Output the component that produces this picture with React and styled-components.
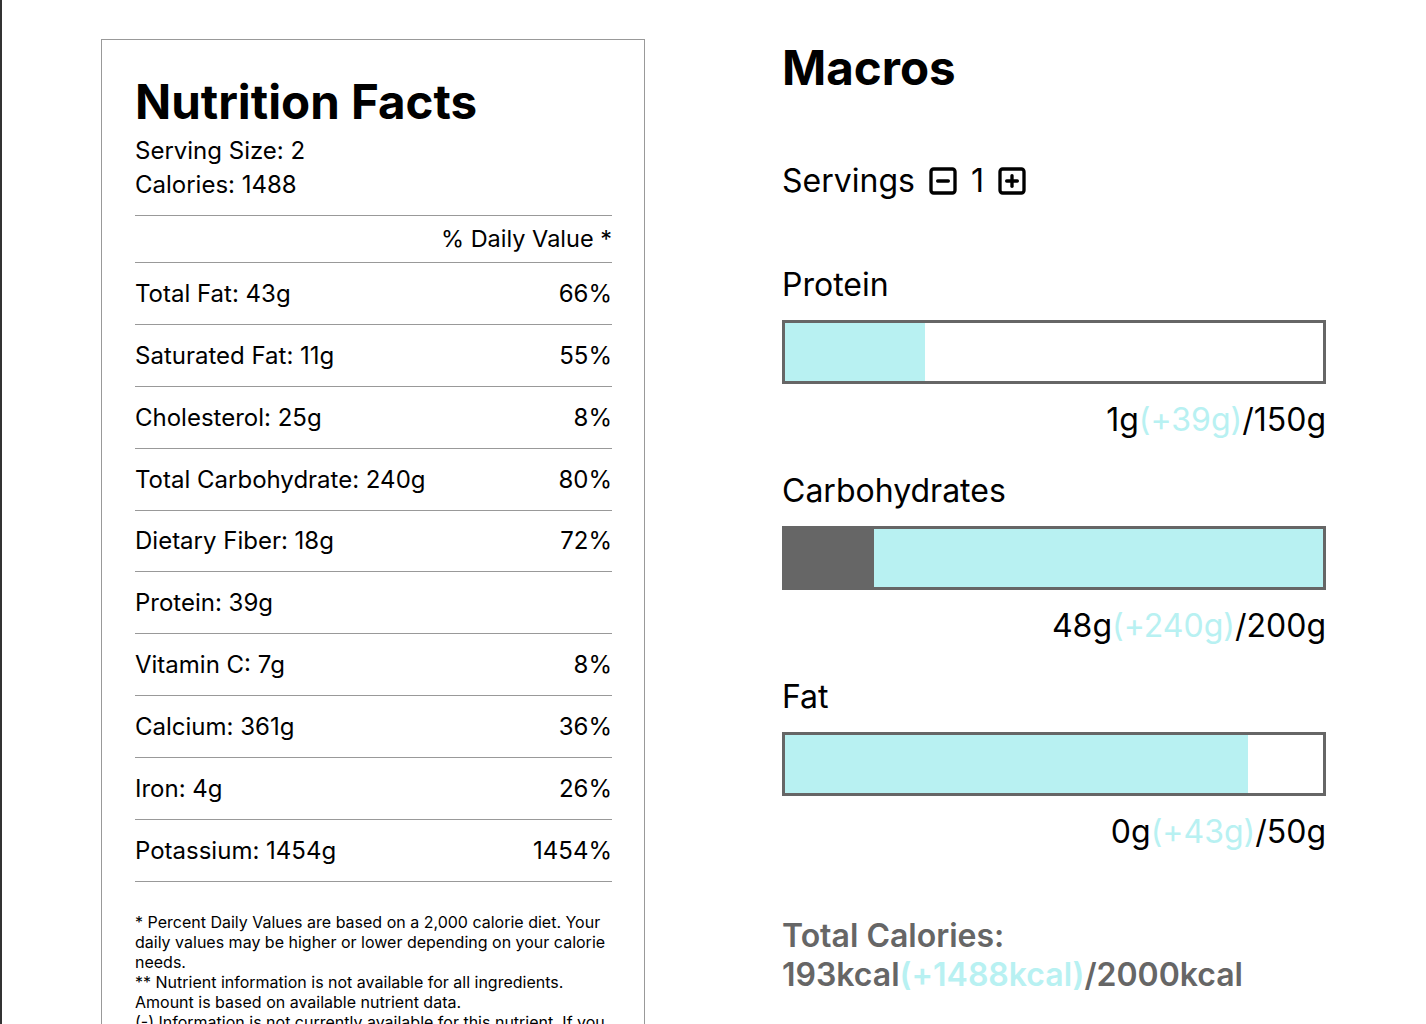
import styled, { createGlobalStyle } from "styled-components";
import { SquareMinus, SquarePlus } from "lucide-react";

const GlobalStyle = createGlobalStyle`
  html, body {
    margin: 0;
    padding: 0;
    background: #fff;
  }
  body {
    font-family: Inter, "Noto Sans", sans-serif;
    color: #000;
  }
`;

const Page = styled.div`
  display: flex;
  align-items: flex-start;
  gap: 137px;
  min-height: 1100px;
  padding: 39px 0 0 99px;
  border-left: 2px solid #333;
`;

const Card = styled.section`
  width: 544px;
  box-sizing: border-box;
  border: 1px solid #999;
  padding: 33px 32px 40px 33px;
`;

const Title = styled.h1`
  margin: 0;
  font-size: 47.5px;
  line-height: 58px;
  font-weight: 700;
`;

const Meta = styled.div`
  margin-top: 3px;
  padding-bottom: 13px;
  border-bottom: 1px solid #999;
  font-size: 24px;
  line-height: 34px;
`;

const Row = styled.div`
  display: flex;
  justify-content: ${(p) => (p.$end ? "flex-end" : "space-between")};
  padding: ${(p) => (p.$end ? "8px 0 9px" : "15.95px 0")};
  border-bottom: 1px solid #999;
  font-size: ${(p) => (p.$end ? "23.5px" : "24px")};
  line-height: 29px;
`;

const Footnote = styled.p`
  margin: 30px 0 0;
  font-size: 16px;
  line-height: 20px;
  white-space: pre-line;
`;

const Macros = styled.section`
  width: 544px;
  display: flex;
  flex-direction: column;
`;

const ServingsRow = styled.div`
  display: flex;
  align-items: center;
  gap: 12px;
  margin-top: 64px;
  font-size: 32px;
  line-height: 40px;
`;

const IconButton = styled.button`
  all: unset;
  cursor: pointer;
  display: flex;
  color: #000;
`;

const MacroBlock = styled.div`
  display: flex;
  flex-direction: column;
  margin-top: ${(p) => (p.$first ? "65px" : "32px")};
`;

const MacroLabel = styled.div`
  font-size: 32px;
  line-height: 38px;
`;

const Bar = styled.div`
  display: flex;
  height: 64px;
  box-sizing: border-box;
  margin-top: 16px;
  border: 3px solid #666;
  background: #fff;
  overflow: hidden;
`;

const Fill = styled.div`
  height: 100%;
  flex-shrink: 0;
  background: ${(p) => (p.$base ? "#666" : "#b8f1f2")};
`;

const MacroValue = styled.div`
  margin-top: 16px;
  text-align: right;
  font-size: 32px;
  line-height: 40px;
`;

const Added = styled.span`
  color: #b8f1f2;
`;

const TotalCalories = styled.div`
  margin-top: 64px;
  font-size: 32px;
  line-height: 39px;
  font-weight: 600;
  color: #666;
`;

const facts = [
  ["Total Fat: 43g", "66%"],
  ["Saturated Fat: 11g", "55%"],
  ["Cholesterol: 25g", "8%"],
  ["Total Carbohydrate: 240g", "80%"],
  ["Dietary Fiber: 18g", "72%"],
  ["Protein: 39g", ""],
  ["Vitamin C: 7g", "8%"],
  ["Calcium: 361g", "36%"],
  ["Iron: 4g", "26%"],
  ["Potassium: 1454g", "1454%"],
];

const macros = [
  { name: "Protein", current: 1, added: 39, goal: 150, base: 0, extra: 26 },
  { name: "Carbohydrates", current: 48, added: 240, goal: 200, base: 16.5, extra: 83.5 },
  { name: "Fat", current: 0, added: 43, goal: 50, base: 0, extra: 86 },
];

const footnote = `* Percent Daily Values are based on a 2,000 calorie diet. Your daily values may be higher or lower depending on your calorie needs.
** Nutrient information is not available for all ingredients. Amount is based on available nutrient data.
(-) Information is not currently available for this nutrient. If you are following a medically restrictive diet, please consult your doctor or registered dietitian before using this information for your meal planning.`;

export default function App() {
  return (
    <>
      <GlobalStyle />
      <Page>
        <Card>
          <Title>Nutrition Facts</Title>
          <Meta>
            <div>Serving Size: 2</div>
            <div>Calories: 1488</div>
          </Meta>
          <Row $end>% Daily Value *</Row>
          {facts.map(([label, pct]) => (
            <Row key={label}>
              <span>{label}</span>
              <span>{pct}</span>
            </Row>
          ))}
          <Footnote>{footnote}</Footnote>
        </Card>

        <Macros>
          <Title>Macros</Title>
          <ServingsRow>
            <span>Servings</span>
            <IconButton aria-label="decrease">
              <SquareMinus size={32} strokeWidth={2.5} />
            </IconButton>
            <span>1</span>
            <IconButton aria-label="increase">
              <SquarePlus size={32} strokeWidth={2.5} />
            </IconButton>
          </ServingsRow>

          {macros.map((m, i) => (
            <MacroBlock key={m.name} $first={i === 0}>
              <MacroLabel>{m.name}</MacroLabel>
              <Bar>
                {m.base > 0 && <Fill $base style={{ width: `${m.base}%` }} />}
                <Fill style={{ width: `${m.extra}%` }} />
              </Bar>
              <MacroValue>
                {m.current}g<Added>(+{m.added}g)</Added>/{m.goal}g
              </MacroValue>
            </MacroBlock>
          ))}

          <TotalCalories>
            Total Calories:
            <br />
            193kcal<Added>(+1488kcal)</Added>/2000kcal
          </TotalCalories>
        </Macros>
      </Page>
    </>
  );
}
